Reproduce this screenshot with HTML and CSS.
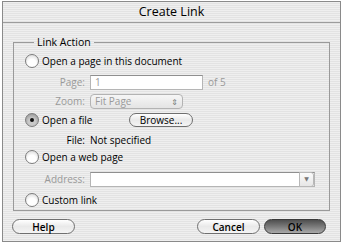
FILE: index.html
```html
<!DOCTYPE html>
<html lang="en">
<head>
    <meta charset="UTF-8">
    <title>Create Link</title>
    <link rel="stylesheet" href="styles.css">
</head>
<body>

    <div class="janela">
        <div class="titulo">Create Link</div>

        <div class="conteudo">
            <fieldset class="grupo">
                <legend>Link Action</legend>

                <div class="linha l1">
                    <span class="radio"></span>
                    <span>Open a page in this document</span>
                </div>

                <div class="linha l2 inativo">
                    <span class="rotulo">Page:</span>
                    <span class="campo pagina">1</span>
                    <span class="de">of 5</span>
                </div>

                <div class="linha l3 inativo">
                    <span class="rotulo">Zoom:</span>
                    <span class="selecao">Fit Page<span class="setas">&#8661;</span></span>
                </div>

                <div class="linha l4">
                    <span class="radio marcado"></span>
                    <span class="texto-arquivo">Open a file</span>
                    <span class="botao navegar">Browse...</span>
                </div>

                <div class="linha l5">
                    <span class="rotulo">File:</span>
                    <span>Not specified</span>
                </div>

                <div class="linha l6">
                    <span class="radio"></span>
                    <span>Open a web page</span>
                </div>

                <div class="linha l7 inativo">
                    <span class="rotulo">Address:</span>
                    <span class="campo endereco"><span class="seta">&#9660;</span></span>
                </div>

                <div class="linha l8">
                    <span class="radio"></span>
                    <span>Custom link</span>
                </div>
            </fieldset>

            <div class="rodape">
                <span class="botao ajuda">Help</span>
                <span class="espaco"></span>
                <span class="botao cancelar">Cancel</span>
                <span class="botao ok">OK</span>
            </div>
        </div>
    </div>

</body>
</html>
```

FILE: styles.css
```css
body{
    margin: 0;
    background-color: white;
    font-family: "Open Sans", "DejaVu Sans", sans-serif;
    font-size: 10px;
    color: black;
}

.janela{
    display: flex;
    flex-direction: column;
    box-sizing: border-box;
    width: 339px;
    height: 241px;
    margin: 1px 0 0 2px;
    border: 1px solid #8a8a8a;
    background: repeating-linear-gradient(to bottom, #efefef 0 1px, #e3e3e3 1px 2px);
}

.titulo{
    height: 20px;
    line-height: 20px;
    text-align: center;
    font-size: 12.5px;
    border-bottom: 1px solid #9c9c9c;
}

.conteudo{
    padding: 0 10px;
}

.grupo{
    margin: 12px 0 0 0;
    padding: 0 0 0 11px;
    height: 176px;
    box-sizing: border-box;
    border: 1px solid #9a9a9a;
}

.grupo legend{
    padding: 0 3px;
    margin-left: 9px;
    font-size: 10.5px;
}

.linha{
    display: flex;
    align-items: center;
    height: 18px;
}

.l1{ margin-top: 3px; }
.l2{ margin-top: 3px; }
.l3{ margin-top: 1px; }
.l4{ margin-top: 1px; }
.l5{ margin-top: 3px; height: 16px; }
.l6{ margin-top: 0; }
.l7{ margin-top: 4px; }
.l8{ margin-top: 4px; height: 16px; }

.radio{
    width: 12px;
    height: 12px;
    margin-right: 3px;
    border-radius: 50%;
    border: 1px solid #7d7d7d;
    background: radial-gradient(circle at 50% 70%, #ffffff 0 40%, #d8d8d8 90%);
    position: relative;
}

.marcado{
    background: radial-gradient(circle at 50% 65%, #c9c9c9 0 35%, #8e8e8e 95%);
}

.marcado::after{
    content: "";
    position: absolute;
    left: 4px;
    top: 4px;
    width: 4px;
    height: 4px;
    border-radius: 50%;
    background-color: #111;
}

.rotulo{
    width: 60px;
    margin-right: 5px;
    text-align: right;
}

.inativo{
    color: #9a9a9a;
}

.campo{
    box-sizing: border-box;
    height: 15px;
    line-height: 13px;
    padding-left: 4px;
    background-color: white;
    border: 1px solid #b5b5b5;
    border-top-color: #8f8f8f;
}

.pagina{
    width: 113px;
}

.de{
    margin-left: 5px;
}

.selecao{
    display: flex;
    justify-content: space-between;
    align-items: center;
    box-sizing: border-box;
    width: 93px;
    height: 15px;
    padding: 0 4px;
    border: 1px solid #b3b3b3;
    border-radius: 4px;
    background: linear-gradient(#f6f6f6, #e4e4e4);
}

.setas{
    font-size: 8px;
    color: #777;
}

.texto-arquivo{
    width: 87px;
}

.endereco{
    position: relative;
    width: 225px;
}

.seta{
    position: absolute;
    right: 0;
    top: -1px;
    width: 15px;
    height: 15px;
    box-sizing: border-box;
    border: 1px solid #b8b8b8;
    border-radius: 0 3px 3px 0;
    text-align: center;
    line-height: 13px;
    font-size: 6px;
    color: #777;
    background: linear-gradient(#fbfbfb, #e6e6e6);
}

.botao{
    display: flex;
    justify-content: center;
    align-items: center;
    box-sizing: border-box;
    height: 14px;
    border: 1px solid #6f6f6f;
    border-radius: 8px;
    background: linear-gradient(#ffffff, #e9e9e9 50%, #f4f4f4);
    font-size: 10px;
}

.navegar{
    width: 64px;
}

.rodape{
    display: flex;
    align-items: center;
    margin-top: 8px;
    padding: 0 4px 0 0;
}

.rodape .botao{
    height: 15px;
    font-weight: 600;
}

.ajuda{
    width: 63px;
    margin-left: -1px;
}

.espaco{
    flex: 1;
}

.cancelar{
    width: 63px;
    margin-right: 4px;
}

.ok{
    width: 62px;
    border-color: #3a3a3a;
    background: linear-gradient(#4f4f4f, #7a7a7a 50%, #a9a9a9);
}
```
